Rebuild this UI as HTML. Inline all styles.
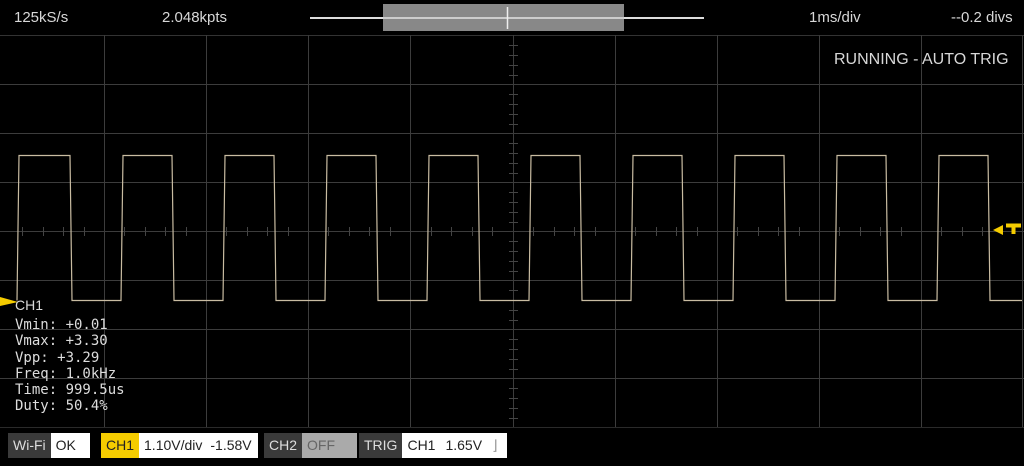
<!DOCTYPE html>
<html><head><style>
body{margin:0;width:1024px;height:466px;background:#000;overflow:hidden;position:relative;font-family:"Liberation Sans",sans-serif;color:#ddd}
.t{position:absolute;font-size:15px;color:#d8d8d8}
.m{position:absolute;left:15px;font-family:"DejaVu Sans Mono","Liberation Mono",monospace;font-size:14px;color:#ddd;line-height:16.3px;top:317px}
.box{position:absolute;top:433px;height:25px;display:flex;font-size:14px;line-height:25px;color:#222}
.box span{display:block;padding:0 5px}
</style></head><body>
<svg width="1024" height="466" style="position:absolute;left:0;top:0">
<g stroke="#3c3c3c" stroke-width="1">
<line x1="0" y1="35.5" x2="1024" y2="35.5" stroke="#333"/>
<line x1="0" y1="84.5" x2="1024" y2="84.5"/>
<line x1="0" y1="133.5" x2="1024" y2="133.5"/>
<line x1="0" y1="182.5" x2="1024" y2="182.5"/>
<line x1="0" y1="231.5" x2="1024" y2="231.5"/>
<line x1="0" y1="280.5" x2="1024" y2="280.5"/>
<line x1="0" y1="329.5" x2="1024" y2="329.5"/>
<line x1="0" y1="378.5" x2="1024" y2="378.5"/>
<line x1="0" y1="427.5" x2="1024" y2="427.5" stroke="#2a2a2a"/>
<line x1="104.5" y1="35" x2="104.5" y2="427"/>
<line x1="206.5" y1="35" x2="206.5" y2="427"/>
<line x1="308.5" y1="35" x2="308.5" y2="427"/>
<line x1="410.5" y1="35" x2="410.5" y2="427"/>
<line x1="513.5" y1="35" x2="513.5" y2="427"/>
<line x1="615.5" y1="35" x2="615.5" y2="427"/>
<line x1="717.5" y1="35" x2="717.5" y2="427"/>
<line x1="819.5" y1="35" x2="819.5" y2="427"/>
<line x1="921.5" y1="35" x2="921.5" y2="427"/>
<line x1="1022.5" y1="35" x2="1022.5" y2="427"/>
</g>
<g stroke="#444">
<path d="M509 45.5h9M509 55.5h9M509 65.5h9M509 75.5h9M509 94.5h9M509 104.5h9M509 114.5h9M509 124.5h9M509 143.5h9M509 153.5h9M509 163.5h9M509 173.5h9M509 192.5h9M509 202.5h9M509 212.5h9M509 222.5h9M509 241.5h9M509 251.5h9M509 261.5h9M509 271.5h9M509 290.5h9M509 300.5h9M509 310.5h9M509 320.5h9M509 339.5h9M509 349.5h9M509 359.5h9M509 369.5h9M509 388.5h9M509 398.5h9M509 408.5h9M509 418.5h9"/>
<path d="M22.5 227v9M43.5 227v9M63.5 227v9M84.5 227v9M124.5 227v9M145.5 227v9M165.5 227v9M186.5 227v9M226.5 227v9M247.5 227v9M267.5 227v9M288.5 227v9M328.5 227v9M349.5 227v9M369.5 227v9M390.5 227v9M431.5 227v9M451.5 227v9M472.5 227v9M492.5 227v9M533.5 227v9M554.5 227v9M574.5 227v9M595.5 227v9M635.5 227v9M656.5 227v9M676.5 227v9M697.5 227v9M737.5 227v9M758.5 227v9M778.5 227v9M799.5 227v9M839.5 227v9M860.5 227v9M880.5 227v9M901.5 227v9M941.5 227v9M962.5 227v9M982.5 227v9"/>
</g>
<path fill="none" stroke="#c9bca2" stroke-width="1.2" d="M17 300.5 L19 155.5 H70 L72 300.5 H121 L123 155.5 H172 L174 300.5 H223 L225 155.5 H274 L276 300.5 H325 L327 155.5 H376 L378 300.5 H427 L429 155.5 H478 L480 300.5 H529 L531 155.5 H580 L582 300.5 H631 L633 155.5 H682 L684 300.5 H733 L735 155.5 H784 L786 300.5 H835 L837 155.5 H886 L888 300.5 H937 L939 155.5 H988 L990 300.5 H1022"/>
<polygon points="0,297 18,302 0,306" fill="#f5cc00"/>
<polygon points="993,230 1003,225 1003,235" fill="#f5cc00"/>
<path d="M1006 225.5h15M1013.5 225v9" stroke="#f5cc00" stroke-width="4"/>
<line x1="310" y1="18" x2="704" y2="18" stroke="#ddd" stroke-width="2"/>
<rect x="383" y="4" width="241" height="27" fill="#888"/>
<line x1="383" y1="18" x2="624" y2="18" stroke="#ccc" stroke-width="2"/>
<line x1="507.5" y1="7" x2="507.5" y2="29" stroke="#eee" stroke-width="1.5"/>
</svg>
<div class="t" style="left:14px;top:9px">125kS/s</div>
<div class="t" style="left:162px;top:9px">2.048kpts</div>
<div class="t" style="left:809px;top:9px">1ms/div</div>
<div class="t" style="left:951px;top:9px">--0.2 divs</div>
<div class="t" style="left:834px;top:51px;font-size:16px">RUNNING - AUTO TRIG</div>
<div class="t" style="left:15px;top:297px;font-size:14px">CH1</div>
<div class="m">Vmin: +0.01<br>Vmax: +3.30<br>Vpp: +3.29<br>Freq: 1.0kHz<br>Time: 999.5us<br>Duty: 50.4%</div>
<div class="box" style="left:8px;width:82px;background:#fff"><span style="background:#3a3a3a;color:#ddd">Wi-Fi</span><span>OK</span></div>
<div class="box" style="left:101px;width:157px;background:#fff"><span style="background:#f5cc00;color:#222">CH1</span><span>1.10V/div</span><span style="padding-left:3px">-1.58V</span></div>
<div class="box" style="left:264px;width:93px;background:#aaa"><span style="background:#3a3a3a;color:#ddd">CH2</span><span style="color:#666">OFF</span></div>
<div class="box" style="left:359px;width:148px;background:#fff"><span style="background:#3a3a3a;color:#ddd">TRIG</span><span>CH1</span><span>1.65V</span><span style="color:#999">⌋</span></div>
</body></html>
